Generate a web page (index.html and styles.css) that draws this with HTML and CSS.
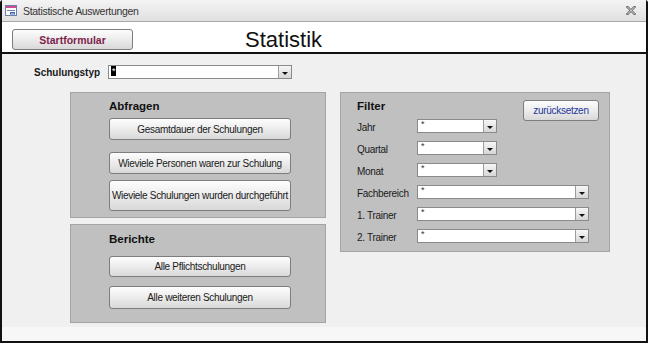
FILE: index.html
```html
<!DOCTYPE html>
<html lang="de">
<head>
  <meta charset="UTF-8" />
  <title>Statistische Auswertungen</title>
  <link rel="stylesheet" href="styles.css">
</head>
<body>
  <div class="window">
    <div class="titlebar">
      <svg class="form-icon" width="12" height="11" viewBox="0 0 12 11">
        <rect x="0.5" y="0.5" width="11" height="10" fill="#fff" stroke="#6d7fa8"/>
        <rect x="1" y="1" width="10" height="2" fill="#c94f8e"/>
        <line x1="2" y1="5.5" x2="10" y2="5.5" stroke="#6d7fa8"/>
        <rect x="5.5" y="7.5" width="4" height="1.5" fill="none" stroke="#3d63b8"/>
      </svg>
      <span class="title">Statistische Auswertungen</span>
      <svg class="close" width="10" height="9" viewBox="0 0 10 9">
        <path d="M1.5 1 L8.5 8 M8.5 1 L1.5 8" stroke="#6a6a6a" stroke-width="2.4" stroke-linecap="square"/>
        <path d="M1.5 1 L8.5 8 M8.5 1 L1.5 8" stroke="#f4f4f4" stroke-width="0.8"/>
      </svg>
    </div>

    <div class="header">
      <button class="btn start">Startformular</button>
      <h1>Statistik</h1>
    </div>

    <div class="content">
      <div class="type-row">
        <label>Schulungstyp</label>
        <div class="combo type">
          <span class="value"><span class="sel">*</span></span>
          <span class="arrow"></span>
        </div>
      </div>

      <div class="panels">
        <div class="left-col">
          <section class="panel queries">
            <h2>Abfragen</h2>
            <button class="btn">Gesamtdauer der Schulungen</button>
            <button class="btn">Wieviele Personen waren zur Schulung</button>
            <button class="btn tall">Wieviele Schulungen wurden durchgeführt</button>
          </section>
          <section class="panel reports">
            <h2>Berichte</h2>
            <button class="btn">Alle Pflichtschulungen</button>
            <button class="btn">Alle weiteren Schulungen</button>
          </section>
        </div>

        <section class="panel filter">
          <div class="filter-head">
            <h2>Filter</h2>
            <button class="btn reset">zurücksetzen</button>
          </div>
          <div class="filter-row">
            <label>Jahr</label>
            <div class="combo short"><span class="value">*</span><span class="arrow"></span></div>
          </div>
          <div class="filter-row">
            <label>Quartal</label>
            <div class="combo short"><span class="value">*</span><span class="arrow"></span></div>
          </div>
          <div class="filter-row">
            <label>Monat</label>
            <div class="combo short"><span class="value">*</span><span class="arrow"></span></div>
          </div>
          <div class="filter-row">
            <label>Fachbereich</label>
            <div class="combo long"><span class="value">*</span><span class="arrow"></span></div>
          </div>
          <div class="filter-row">
            <label>1. Trainer</label>
            <div class="combo long"><span class="value">*</span><span class="arrow"></span></div>
          </div>
          <div class="filter-row">
            <label>2. Trainer</label>
            <div class="combo long"><span class="value">*</span><span class="arrow"></span></div>
          </div>
        </section>
      </div>
    </div>

    <div class="footer"></div>
  </div>
</body>
</html>
```

FILE: styles.css
```css
body {
  margin: 0;
  background: #fff;
  font-family: "Liberation Sans", Arial, sans-serif;
  font-size: 10px;
  letter-spacing: -0.3px;
  color: #1a1a1a;
}
.window {
  width: 648px;
  height: 343px;
  box-sizing: border-box;
  border: 2px solid #111;
  border-top: none;
  border-radius: 3px 3px 0 0;
  display: flex;
  flex-direction: column;
}
.titlebar {
  height: 21px;
  border-bottom: 1px solid #a8a8a8;
  background: linear-gradient(#f4f4f4, #e0e0e0);
  display: flex;
  align-items: center;
  padding: 0 10px 0 3px;
}
.form-icon {
  margin-right: 6px;
}
.title {
  flex: 1;
  font-size: 10.5px;
  color: #333;
}
.header {
  height: 32px;
  box-sizing: border-box;
  background: #fff;
  border-bottom: 2px solid #111;
  display: flex;
  align-items: flex-start;
  padding: 7px 0 0 10px;
}
.header h1 {
  margin: 0 0 0 112px;
  font-size: 22px;
  font-weight: normal;
  line-height: 22px;
  letter-spacing: 0;
  color: #111;
}
.btn {
  display: block;
  width: 182px;
  height: 22px;
  padding: 0;
  border: 1px solid #7d7d7d;
  border-radius: 3px;
  background: linear-gradient(#fdfdfd, #ececec 50%, #d8d8d8);
  font-family: inherit;
  font-size: 10px;
  letter-spacing: -0.3px;
  color: #1a1a1a;
}
.btn.start {
  width: 121px;
  height: 21px;
  font-size: 10.5px;
  font-weight: bold;
  letter-spacing: 0;
  color: #7d1f4b;
}
.content {
  flex: 1;
  background: #f0f0f0;
  padding-top: 11px;
}
.footer {
  height: 14px;
  background: #f7f7f7;
}
.type-row {
  display: flex;
  align-items: center;
  gap: 8px;
  padding-left: 32px;
}
.type-row label {
  width: 66px;
  font-weight: bold;
  letter-spacing: 0;
}
.combo {
  display: flex;
  height: 14px;
  box-sizing: border-box;
  border: 1px solid #8a8a8a;
  background: #fff;
}
.combo .value {
  flex: 1;
  padding-left: 3px;
  font-size: 9px;
  line-height: 8px;
  color: #333;
}
.combo .sel {
  display: inline-block;
  margin-left: -1px;
  padding: 0 1px;
  height: 10px;
  line-height: 10px;
  background: #000;
  color: #fff;
}
.combo .arrow {
  width: 12px;
  border-left: 1px solid #9c9c9c;
  background: linear-gradient(#f6f6f6, #d6d6d6);
  display: flex;
  align-items: center;
  justify-content: center;
}
.combo .arrow::after {
  content: "";
  border-left: 3px solid transparent;
  border-right: 3px solid transparent;
  border-top: 3px solid #111;
  margin-top: 2px;
}
.combo.type {
  width: 184px;
}
.combo.short {
  width: 80px;
}
.combo.long {
  width: 172px;
}
.panels {
  display: flex;
  align-items: flex-start;
  gap: 14px;
  margin: 13px 0 0 68px;
}
.left-col {
  width: 256px;
  display: flex;
  flex-direction: column;
  gap: 6px;
}
.panel {
  box-sizing: border-box;
  background: #c0c0c0;
  border: 1px solid #a4a4a4;
}
.panel h2 {
  margin: 0;
  font-size: 11.5px;
  line-height: 14px;
  letter-spacing: 0;
  color: #111;
}
.queries {
  height: 126px;
  padding: 6px 0 0 38px;
}
.queries .btn {
  margin-top: 12px;
}
.queries h2 + .btn {
  margin-top: 5px;
}
.queries .btn.tall {
  height: 31px;
  margin-top: 6px;
}
.reports {
  height: 99px;
  padding: 7px 0 0 38px;
}
.reports .btn {
  height: 23px;
  margin-top: 9px;
}
.reports h2 + .btn {
  height: 21px;
  margin-top: 10px;
}
.filter {
  width: 270px;
  height: 160px;
  padding: 6px 10px 0 16px;
}
.filter-head {
  display: flex;
  justify-content: space-between;
  align-items: flex-start;
  height: 14px;
}
.btn.reset {
  width: 76px;
  height: 21px;
  margin-top: 1px;
  color: #23359a;
}
.filter-row {
  display: flex;
  align-items: center;
  height: 14px;
  margin-top: 8px;
}
.filter-head + .filter-row {
  margin-top: 6px;
}
.filter-row label {
  width: 60px;
  padding-top: 2px;
}
```
